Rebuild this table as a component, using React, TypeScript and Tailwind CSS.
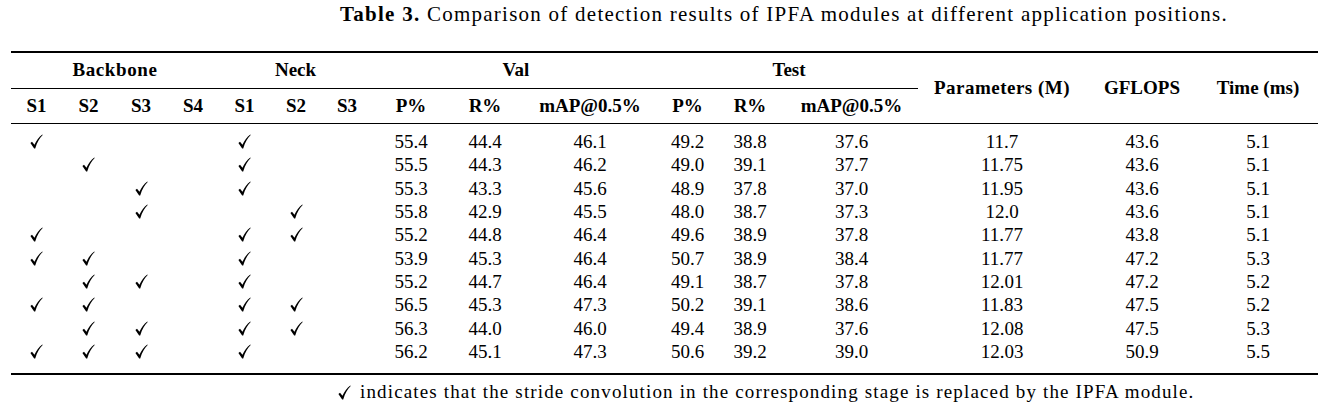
import React from "react";

interface Row {
  bb: number[];
  nk: number[];
  val: string[];
  test: string[];
  params: string;
  gflops: string;
  time: string;
}

const rows: Row[] = [
  { bb: [1, 0, 0, 0], nk: [1, 0, 0], val: ["55.4", "44.4", "46.1"], test: ["49.2", "38.8", "37.6"], params: "11.7", gflops: "43.6", time: "5.1" },
  { bb: [0, 1, 0, 0], nk: [1, 0, 0], val: ["55.5", "44.3", "46.2"], test: ["49.0", "39.1", "37.7"], params: "11.75", gflops: "43.6", time: "5.1" },
  { bb: [0, 0, 1, 0], nk: [1, 0, 0], val: ["55.3", "43.3", "45.6"], test: ["48.9", "37.8", "37.0"], params: "11.95", gflops: "43.6", time: "5.1" },
  { bb: [0, 0, 1, 0], nk: [0, 1, 0], val: ["55.8", "42.9", "45.5"], test: ["48.0", "38.7", "37.3"], params: "12.0", gflops: "43.6", time: "5.1" },
  { bb: [1, 0, 0, 0], nk: [1, 1, 0], val: ["55.2", "44.8", "46.4"], test: ["49.6", "38.9", "37.8"], params: "11.77", gflops: "43.8", time: "5.1" },
  { bb: [1, 1, 0, 0], nk: [1, 0, 0], val: ["53.9", "45.3", "46.4"], test: ["50.7", "38.9", "38.4"], params: "11.77", gflops: "47.2", time: "5.3" },
  { bb: [0, 1, 1, 0], nk: [1, 0, 0], val: ["55.2", "44.7", "46.4"], test: ["49.1", "38.7", "37.8"], params: "12.01", gflops: "47.2", time: "5.2" },
  { bb: [1, 1, 0, 0], nk: [1, 1, 0], val: ["56.5", "45.3", "47.3"], test: ["50.2", "39.1", "38.6"], params: "11.83", gflops: "47.5", time: "5.2" },
  { bb: [0, 1, 1, 0], nk: [1, 1, 0], val: ["56.3", "44.0", "46.0"], test: ["49.4", "38.9", "37.6"], params: "12.08", gflops: "47.5", time: "5.3" },
  { bb: [1, 1, 1, 0], nk: [1, 0, 0], val: ["56.2", "45.1", "47.3"], test: ["50.6", "39.2", "39.0"], params: "12.03", gflops: "50.9", time: "5.5" },
];

const cols =
  "grid grid-cols-[51px_53px_52px_52px_51px_52px_50px_78px_70px_140px_55px_70px_133px_168px_112px_120px]";

const Check = () => (
  <svg width="13" height="15" viewBox="0 0 12 14" className="inline-block shrink-0">
    <path
      d="M0.3 8.3 L1.8 7.2 L4.1 10.1 C5.9 6.1 8.3 2.7 11.4 0.4 L11.8 0.9 C8.9 3.5 6.6 7.6 4.8 13.5 L3.8 13.5 Z"
      fill="#000"
    />
  </svg>
);

const App = () => {
  return (
    <div className="h-[410px] w-[1332px] overflow-hidden bg-white font-['Liberation_Serif',serif] text-[19px] text-black">
      {/* Caption */}
      <p className="pl-[340px] pt-[2px] text-[21px] leading-[24px] tracking-[1.25px]">
        <span className="font-bold">Table 3.</span> Comparison of detection
        results of IPFA modules at different application positions.
      </p>

      <div className="ml-[11px] mt-[25px] w-[1307px]">
        <div className="h-[2px] bg-black" />

        {/* Header */}
        <div className={`${cols} grid-rows-[35px_1px_34px] font-bold`}>
          <div className="col-span-4 flex items-center justify-center tracking-[0.6px]">Backbone</div>
          <div className="col-span-3 flex items-center justify-center">Neck</div>
          <div className="col-span-3 flex items-center justify-center">Val</div>
          <div className="col-span-3 flex items-center justify-center">Test</div>
          <div className="col-start-14 row-span-3 row-start-1 flex items-center justify-center tracking-[0.5px]">Parameters (M)</div>
          <div className="col-start-15 row-span-3 row-start-1 flex items-center justify-center">GFLOPS</div>
          <div className="col-start-16 row-span-3 row-start-1 flex items-center justify-center">Time (ms)</div>
          <div className="col-span-13 col-start-1 row-start-2 bg-black" />
          {["S1", "S2", "S3", "S4", "S1", "S2", "S3", "P%", "R%", "mAP@0.5%", "P%", "R%", "mAP@0.5%"].map(
            (h, i) => (
              <div key={i} className="row-start-3 flex items-center justify-center">
                {h}
              </div>
            ),
          )}
        </div>

        <div className="h-px bg-black" />

        {/* Body */}
        <div className="pb-[10px] pt-[6px]">
          {rows.map((r, i) => (
            <div key={i} className={`${cols} h-[23.33px] leading-[23.33px]`}>
              {[...r.bb, ...r.nk].map((c, j) => (
                <div key={j} className="flex items-center justify-center">
                  {c ? <Check /> : null}
                </div>
              ))}
              {[...r.val, ...r.test, r.params, r.gflops, r.time].map((v, j) => (
                <div key={j} className="text-center">
                  {v}
                </div>
              ))}
            </div>
          ))}
        </div>

        <div className="h-[2px] bg-black" />
      </div>

      {/* Footnote */}
      <p className="mt-[5px] flex items-center gap-[9px] pl-[338px] leading-[24px] tracking-[1.15px]">
        <Check />
        <span>
          indicates that the stride convolution in the corresponding stage is
          replaced by the IPFA module.
        </span>
      </p>
    </div>
  );
};

export default App;
